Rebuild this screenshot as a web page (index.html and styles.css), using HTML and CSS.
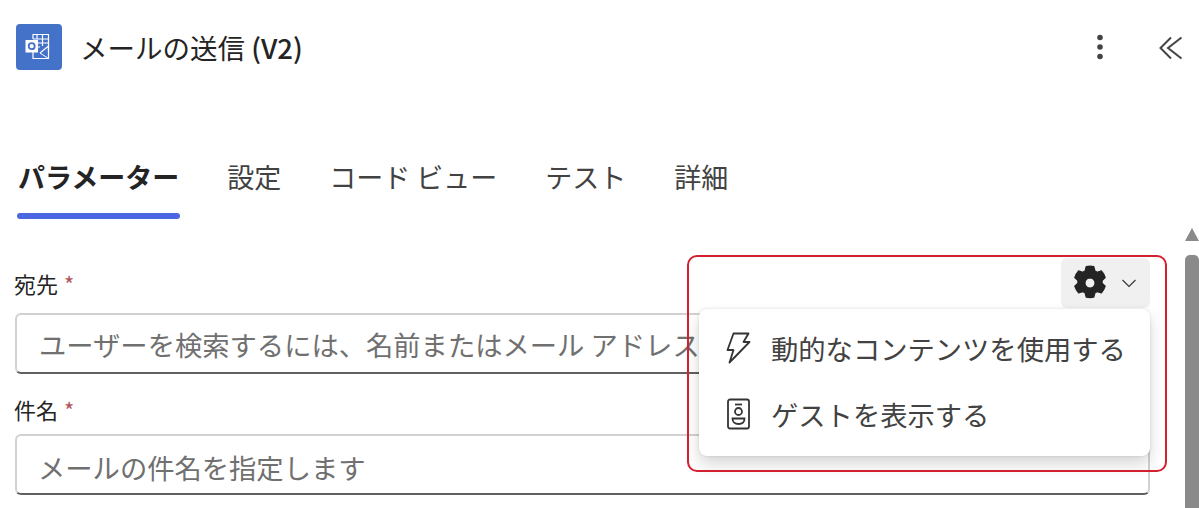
FILE: index.html
```html
<!DOCTYPE html>
<html lang="ja">
<head>
    <meta charset="utf-8">
    <title>メールの送信 (V2)</title>
    <link rel="stylesheet" href="styles.css">
</head>
<body>
    <div class="panel">
        <div class="header">
            <div class="app-icon">
                <svg width="30" height="30" viewBox="0 0 30 30" fill="none" stroke="#fff" stroke-width="1.2">
                    <path d="M9 7V2.500h15.500V20"/>
                    <path d="M13 2.500v4M18.500 2.500V14M24.500 7H9M13 11h11.500M13 15h3"/>
                    <path d="M9 19v7.500h15.500V14L16 21"/>
                    <path d="M16 21l8.500 5.500" stroke-width="1"/>
                    <rect x="1.500" y="8" width="12.500" height="12.500" fill="#fff" stroke="none"/>
                    <circle cx="7.700" cy="14.200" r="3" stroke="#4472c8" stroke-width="1.800"/>
                </svg>
            </div>
            <h1 class="title">メールの送信 <span class="version">(V2)</span></h1>
            <button class="icon-btn more">
                <svg width="8" height="26" viewBox="0 0 8 26" fill="#444">
                    <circle cx="4" cy="3.500" r="2.800"/>
                    <circle cx="4" cy="13" r="2.800"/>
                    <circle cx="4" cy="22.500" r="2.800"/>
                </svg>
            </button>
            <button class="icon-btn collapse">
                <svg width="24" height="24" viewBox="0 0 24 24" fill="none" stroke="#444" stroke-width="2">
                    <path d="M12 1.500L1.500 12 12 22.500"/>
                    <path d="M22.500 1.500L9 12l13.500 10.500"/>
                </svg>
            </button>
        </div>

        <div class="tabs">
            <div class="tab active">パラメーター</div>
            <div class="tab">設定</div>
            <div class="tab">コード ビュー</div>
            <div class="tab">テスト</div>
            <div class="tab">詳細</div>
        </div>

        <div class="form">
            <div class="field">
                <label class="label first">宛先 <span class="req">*</span></label>
                <div class="input">ユーザーを検索するには、名前またはメール アドレス</div>
            </div>
            <div class="field">
                <label class="label">件名 <span class="req">*</span></label>
                <div class="input subject">メールの件名を指定します</div>
            </div>
        </div>

        <div class="scrollbar">
            <div class="arrow"></div>
            <div class="thumb"></div>
        </div>

        <div class="settings-btn">
            <svg width="38" height="38" viewBox="0 0 24 24" fill="#242424" stroke="#242424" stroke-width="0.8" stroke-linejoin="round">
                <path fill-rule="evenodd" d="M9.600 1.700c1.600-.4 3.200-.4 4.800 0l.7 2.700c.5.200 1 .5 1.400.8l2.700-.8c1.100 1.200 1.900 2.600 2.400 4.200l-2 1.900a7 7 0 0 1 0 1.600l2 1.900c-.5 1.600-1.300 3-2.400 4.200l-2.700-.8c-.4.300-.9.600-1.400.8l-.7 2.700c-1.600.4-3.200.4-4.800 0l-.7-2.700c-.5-.2-1-.5-1.400-.8l-2.700.8c-1.100-1.200-1.900-2.600-2.400-4.200l2-1.900a7 7 0 0 1 0-1.600l-2-1.900c.5-1.600 1.300-3 2.400-4.200l2.700.8c.4-.3.900-.6 1.400-.8zM12 8.800a3.200 3.200 0 1 0 0 6.400 3.200 3.200 0 0 0 0-6.400z"/>
            </svg>
            <svg width="16" height="10" viewBox="0 0 16 10" fill="none" stroke="#333" stroke-width="1.100">
                <path d="M1.500 2l6.500 6.500L14.500 2"/>
            </svg>
        </div>

        <div class="menu">
            <div class="menu-item">
                <svg width="26" height="32" viewBox="0 0 26 32" fill="none" stroke="#333" stroke-width="1.800" stroke-linejoin="round">
                    <path d="M8.500 1.500h15l-5 8.500h6L4.500 30.500 8.500 18H2.500z"/>
                </svg>
                <span>動的なコンテンツを使用する</span>
            </div>
            <div class="menu-item">
                <svg width="26" height="32" viewBox="0 0 26 32" fill="none" stroke="#333" stroke-width="1.800">
                    <rect x="3" y="1.500" width="21" height="29" rx="2"/>
                    <path d="M10 6.500h7"/>
                    <circle cx="13.500" cy="13.500" r="3.500"/>
                    <path d="M7.500 20.500h12c0 3.500-2.500 5.500-6 5.500s-6-2-6-5.500z"/>
                </svg>
                <span>ゲストを表示する</span>
            </div>
        </div>

        <div class="highlight"></div>
    </div>
</body>
</html>
```

FILE: styles.css
```css
body {
    margin: 0;
    background-color: #fff;
    color: #242424;
    font-family: "Noto Sans CJK JP", "Noto Sans", sans-serif;
    overflow: hidden;
}

.panel {
    position: relative;
    width: 1199px;
    height: 508px;
    overflow: hidden;
}

/* Header */
.header {
    display: flex;
    align-items: center;
    height: 46px;
    padding: 24px 16px 0 16px;
}

.app-icon {
    display: flex;
    align-items: center;
    justify-content: center;
    width: 46px;
    height: 46px;
    background-color: #4472c8;
    border-radius: 4px;
}

.title {
    flex: 1;
    margin: 0 0 0 18px;
    font-size: 27.5px;
    font-weight: 400;
    line-height: 44px;
}

.version {
    font-weight: 500;
}

.icon-btn {
    display: flex;
    padding: 0;
    border: 0;
    background: none;
}

.more {
    margin-right: 55px;
}

.collapse {
    margin-top: 2px;
}

/* Tabs */
.tabs {
    display: flex;
    gap: 48px;
    margin-top: 84px;
    padding-left: 18px;
}

.tab {
    position: relative;
    height: 65px;
    font-size: 27px;
    line-height: 46px;
    color: #424242;
    white-space: nowrap;
}

.tab.active {
    font-weight: 700;
    color: #242424;
}

.tab.active::after {
    content: "";
    position: absolute;
    left: -1px;
    right: -1px;
    bottom: 0;
    height: 6px;
    background-color: #4a66e0;
    border-radius: 3px;
}

/* Form */
.form {
    display: flex;
    flex-direction: column;
    gap: 16px;
    width: 1135px;
    margin-top: 50px;
    padding-left: 15px;
}

.label {
    display: block;
    height: 44px;
    margin-left: -1px;
    font-size: 22px;
    line-height: 38px;
}

.label.first {
    line-height: 28px;
}

.req {
    margin-left: 1px;
    color: #b0545a;
}

.input {
    box-sizing: border-box;
    height: 61px;
    padding: 0 22px;
    overflow: hidden;
    border: 2px solid #d1d1d1;
    border-bottom-color: #616161;
    border-radius: 6px;
    font-size: 27.3px;
    line-height: 58px;
    color: #707070;
    white-space: nowrap;
}

.input.subject {
    padding-left: 21px;
    line-height: 62px;
}

/* Scrollbar */
.scrollbar {
    position: absolute;
    top: 228px;
    right: 0;
    bottom: 0;
    display: flex;
    flex-direction: column;
    align-items: center;
    width: 14px;
}

.arrow {
    width: 0;
    height: 0;
    border-left: 7px solid transparent;
    border-right: 7px solid transparent;
    border-bottom: 13px solid #8a8a8a;
}

.thumb {
    flex: 1;
    width: 14px;
    margin-top: 14px;
    background-color: #8a8a8a;
    border-radius: 5px 5px 0 0;
}

/* Overlay: settings button and dropdown */
.settings-btn {
    position: absolute;
    top: 258px;
    left: 1061px;
    display: flex;
    align-items: center;
    gap: 12px;
    box-sizing: border-box;
    width: 89px;
    height: 50px;
    padding-left: 10px;
    background-color: #f0f0f0;
    border-radius: 6px;
}

.menu {
    position: absolute;
    top: 309px;
    left: 699px;
    display: flex;
    flex-direction: column;
    box-sizing: border-box;
    width: 451px;
    height: 147px;
    padding: 6px 0;
    background-color: #fff;
    border-radius: 8px;
    box-shadow: 0 8px 16px rgba(0, 0, 0, 0.16), 0 0 3px rgba(0, 0, 0, 0.12);
}

.menu-item {
    display: flex;
    align-items: center;
    gap: 20px;
    height: 66px;
    padding-left: 26px;
    font-size: 27.3px;
    color: #424242;
    white-space: nowrap;
}

.highlight {
    position: absolute;
    top: 255px;
    left: 687px;
    box-sizing: border-box;
    width: 480px;
    height: 217px;
    border: 2px solid #d2202f;
    border-radius: 10px;
}
```
